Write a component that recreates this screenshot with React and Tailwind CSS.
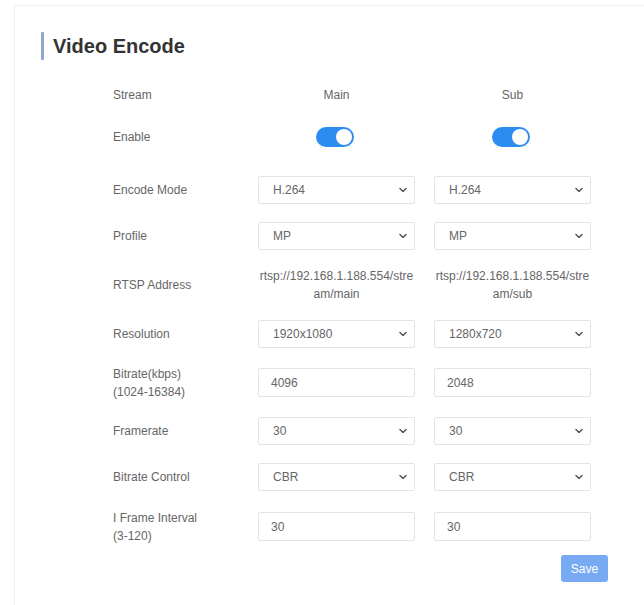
import React from "react";

function Chevron() {
  return (
    <svg width="8" height="5" viewBox="0 0 8 5" className="absolute right-[7px] top-1/2 -translate-y-1/2">
      <path d="M1 1 L4 4 L7 1" fill="none" stroke="#555" strokeWidth="1.5" strokeLinecap="round" strokeLinejoin="round" />
    </svg>
  );
}

function Select({ value }) {
  return (
    <div className="relative w-[157px] h-[28px] border border-[#e2e4ea] rounded-[2px] bg-white flex items-center pl-[14px] text-[12px] text-[#666]">
      {value}
      <Chevron />
    </div>
  );
}

function Input({ value }) {
  return (
    <div className="w-[157px] h-[29px] border border-[#e2e4ea] rounded-[2px] bg-white flex items-center pl-[12px] text-[12px] text-[#666]">
      {value}
    </div>
  );
}

function Toggle() {
  return (
    <div className="w-[38px] h-[20px] rounded-full bg-[#2d8cf0] flex items-center justify-end pr-[2px]">
      <div className="w-[16px] h-[16px] rounded-full bg-white" />
    </div>
  );
}

function Row({ label, a, b, h = 28, mt }) {
  return (
    <div className={`flex items-center ${mt}`} style={{ height: h }}>
      <div className="w-[145px] text-[12px] leading-[18px] text-[#666]">{label}</div>
      <div className="w-[157px] flex justify-center">{a}</div>
      <div className="w-[19px]" />
      <div className="w-[157px] flex justify-center">{b}</div>
    </div>
  );
}

export default function App() {
  return (
    <div className="w-[644px] h-[605px] bg-white overflow-hidden" style={{ fontFamily: '"Liberation Sans", Arial, sans-serif' }}>
      <div className="ml-[14px] mt-[5px] h-[600px] border-t border-l border-[#efefef]">
        <div className="flex items-center ml-[26px] mt-[26px] h-[28px]">
          <div className="w-[3px] h-[28px] bg-[#93a6cf] rounded-[1px]" />
          <div className="ml-[9px] text-[20px] font-bold text-[#333]">Video Encode</div>
        </div>
        <div className="ml-[98px]">
          <Row mt="mt-[21px]" label="Stream" a={<span className="text-[12px] text-[#666]">Main</span>} b={<span className="text-[12px] text-[#666]">Sub</span>} />
          <Row mt="mt-[14px]" label="Enable" a={<div className="pr-[3px]"><Toggle /></div>} b={<div className="pr-[3px]"><Toggle /></div>} />
          <Row mt="mt-[25px]" label="Encode Mode" a={<Select value="H.264" />} b={<Select value="H.264" />} />
          <Row mt="mt-[18px]" label="Profile" a={<Select value="MP" />} b={<Select value="MP" />} />
          <Row mt="mt-[17px]" h={36} label="RTSP Address"
            a={<div className="text-center break-all text-[12px] leading-[18px] text-[#666]">rtsp://192.168.1.188.554/stream/main</div>}
            b={<div className="text-center break-all text-[12px] leading-[18px] text-[#666]">rtsp://192.168.1.188.554/stream/sub</div>} />
          <Row mt="mt-[17px]" label="Resolution" a={<Select value="1920x1080" />} b={<Select value="1280x720" />} />
          <Row mt="mt-[20px]" h={29} label={<>Bitrate(kbps)<br />(1024-16384)</>} a={<Input value="4096" />} b={<Input value="2048" />} />
          <Row mt="mt-[20px]" label="Framerate" a={<Select value="30" />} b={<Select value="30" />} />
          <Row mt="mt-[18px]" label="Bitrate Control" a={<Select value="CBR" />} b={<Select value="CBR" />} />
          <Row mt="mt-[21px]" h={29} label={<>I Frame Interval<br />(3-120)</>} a={<Input value="30" />} b={<Input value="30" />} />
          <div className="flex mt-[14px]">
            <div className="ml-[448px] w-[47px] h-[27px] rounded-[3px] bg-[#78a9f3] text-white text-[12px] flex items-center justify-center">Save</div>
          </div>
        </div>
      </div>
    </div>
  );
}
